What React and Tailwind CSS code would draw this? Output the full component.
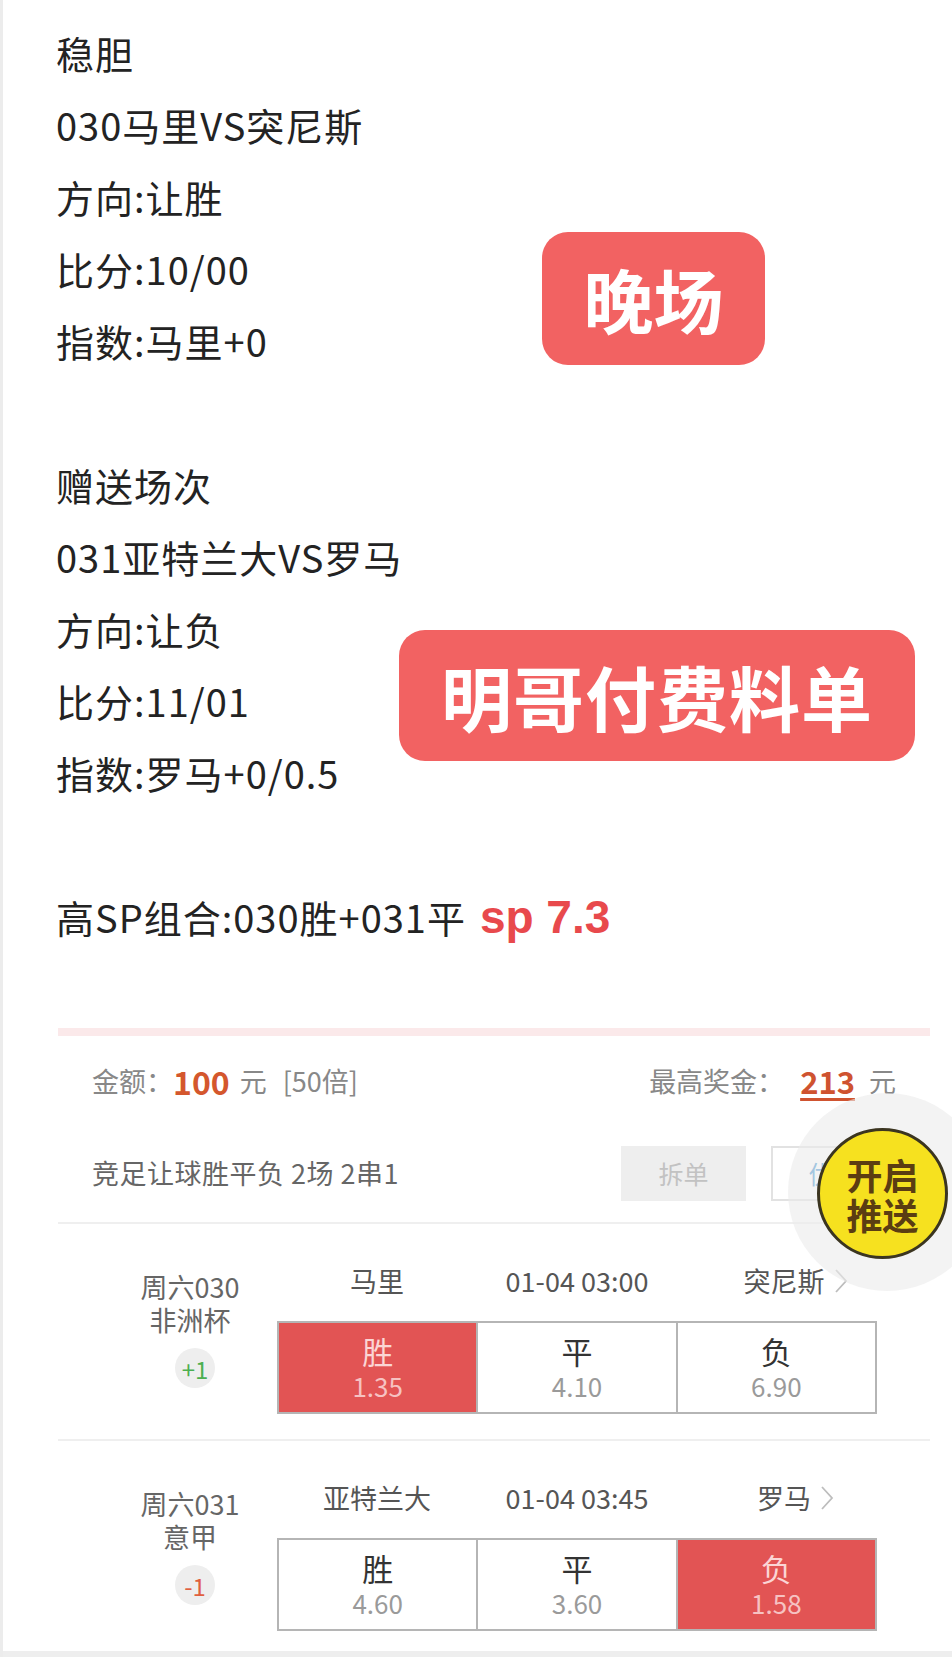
import React from 'react';

const cjk = { fontFamily: '"Noto Sans CJK SC", "Noto Sans", sans-serif' };

const Chevron = () => (
  <svg width="16" height="28" viewBox="0 0 16 28" className="ml-[8px] inline-block">
    <polyline points="3,3 13,14 3,25" fill="none" stroke="#bdbdbd" strokeWidth="1.8" />
  </svg>
);

const OddsCell = ({ label, odds, picked, last }) => (
  <div
    className={`flex-1 flex flex-col items-center justify-center ${last ? '' : 'border-r-2 border-[#b5b5b5]'} ${
      picked ? 'bg-[#e25454]' : 'bg-white'
    }`}
  >
    <span className={`text-[31px] leading-[36px] ${picked ? 'text-[#fbd5d5]' : 'text-[#333]'}`}>{label}</span>
    <span className={`text-[26px] leading-[34px] ${picked ? 'text-[#f6c2c2]' : 'text-[#9a9a9a]'}`}>{odds}</span>
  </div>
);

const MatchRow = ({ day, league, handicap, handicapColor, home, time, away, odds, pick, last }) => (
  <div className={`flex pt-[39px] ${last ? 'pb-[19px]' : 'pb-[25px] border-b-2 border-[#efefef]'}`}>
    <div className="ml-[62px] w-[140px] mt-[7px] flex flex-col items-center text-[27px] leading-[33px] text-[#666]">
      <span>{day}</span>
      <span>{league}</span>
      <span
        className={`mt-[12px] ml-[10px] w-[40px] h-[40px] rounded-full bg-[#eeeeee] flex items-center justify-center text-[24px] ${handicapColor}`}
      >
        {handicap}
      </span>
    </div>
    <div className="ml-[17px] w-[600px]">
      <div className="flex h-[36px] items-center text-[27px] text-[#555]">
        <span className="w-[200px] shrink-0 text-center">{home}</span>
        <span className="w-[200px] shrink-0 text-center">{time}</span>
        <span className="w-[200px] shrink-0 flex items-center justify-center pl-[38px]">
          {away}
          <Chevron />
        </span>
      </div>
      <div className="mt-[22px] h-[93px] flex border-2 border-[#b5b5b5]">
        {['胜', '平', '负'].map((l, i) => (
          <OddsCell key={l} label={l} odds={odds[i]} picked={pick === i} last={i === 2} />
        ))}
      </div>
    </div>
  </div>
);

export default function App() {
  return (
    <div className="relative w-[952px] h-[1657px] bg-white overflow-hidden border-l-[3px] border-[#ececec]" style={cjk}>
      {/* Text section */}
      <div className="pl-[53px] pt-[17px] text-[38px] leading-[72px] tracking-[1px] text-[#232323] whitespace-nowrap">
        <div className="flex">
          <div className="w-[486px]">
            <div>稳胆</div>
            <div>030马里VS突尼斯</div>
            <div>方向:让胜</div>
            <div>比分:10/00</div>
            <div>指数:马里+0</div>
          </div>
          <div className="mt-[215px] w-[223px] h-[133px] rounded-[26px] bg-[#f26262] flex items-center justify-center text-white text-[70px] font-bold leading-none tracking-normal">
            晚场
          </div>
        </div>
        <div className="h-[72px]" />
        <div className="flex">
          <div className="w-[343px]">
            <div>赠送场次</div>
            <div>031亚特兰大VS罗马</div>
            <div>方向:让负</div>
            <div>比分:11/01</div>
            <div>指数:罗马+0/0.5</div>
          </div>
          <div className="mt-[181px] w-[516px] h-[131px] rounded-[26px] bg-[#f26262] flex items-center justify-center text-white text-[71px] font-bold leading-none tracking-[1px]">
            明哥付费料单
          </div>
        </div>
        <div className="h-[72px]" />
        <div>
          高SP组合:030胜+031平
          <span
            className="ml-[14px] text-[46px] font-bold text-[#e8494c] tracking-normal"
            style={{ fontFamily: '"Liberation Sans", Arial, sans-serif' }}
          >
            sp 7.3
          </span>
        </div>
      </div>

      {/* Bet card */}
      <div className="ml-[55px] w-[872px] mt-[75px]">
        <div className="h-[8px] bg-[#fbe9ea]" />
        <div className="px-[34px] pt-[27px] flex items-center justify-between h-[63px] text-[27px] text-[#888]">
          <div className="flex items-center">
            <span>金额：</span>
            <span className="text-[32px] font-bold text-[#d4572d]">100</span>
            <span className="ml-[10px]">元</span>
            <span className="ml-[16px]">[50倍]</span>
          </div>
          <div className="flex items-center">
            <span>最高奖金：</span>
            <span className="ml-[16px] text-[31px] font-bold text-[#cf5330] underline decoration-[3px] underline-offset-[4px]">213</span>
            <span className="ml-[14px]">元</span>
          </div>
        </div>
        <div className="mt-[47px] px-[34px] pb-[21px] flex items-center justify-between border-b-2 border-[#efefef]">
          <span className="text-[27px] text-[#666] tracking-[0.5px]">竞足让球胜平负 2场 2串1</span>
          <div className="flex gap-[25px]">
            <div className="w-[125px] h-[55px] bg-[#eeeeee] flex items-center justify-center text-[25px] text-[#c2c2c2]">
              拆单
            </div>
            <div className="w-[125px] h-[55px] bg-white border-2 border-[#e2e2e2] flex items-center justify-center text-[25px] text-[#3a8fd0]">
              优化
            </div>
          </div>
        </div>

        <MatchRow
          day="周六030"
          league="非洲杯"
          handicap="+1"
          handicapColor="text-[#4caf50]"
          home="马里"
          time="01-04 03:00"
          away="突尼斯"
          odds={['1.35', '4.10', '6.90']}
          pick={0}
        />
        <MatchRow
          day="周六031"
          league="意甲"
          handicap="-1"
          handicapColor="text-[#e0603f]"
          home="亚特兰大"
          time="01-04 03:45"
          away="罗马"
          odds={['4.60', '3.60', '1.58']}
          pick={2}
          last
        />
      </div>
      <div className="mt-[1px] h-[6px] bg-[#eeeeee]" />

      {/* Floating push button */}
      <div className="absolute left-[785px] top-[1093px] w-[198px] h-[198px] rounded-full bg-[#ebebeb]/60" />
      <div className="absolute left-[814px] top-[1128px] w-[131px] h-[131px] rounded-full bg-[#f6e11f] border-[3px] border-[#3b3520] flex flex-col items-center justify-center text-[36px] leading-[40px] font-bold text-[#5b3d12]">
        <span>开启</span>
        <span>推送</span>
      </div>
    </div>
  );
}
